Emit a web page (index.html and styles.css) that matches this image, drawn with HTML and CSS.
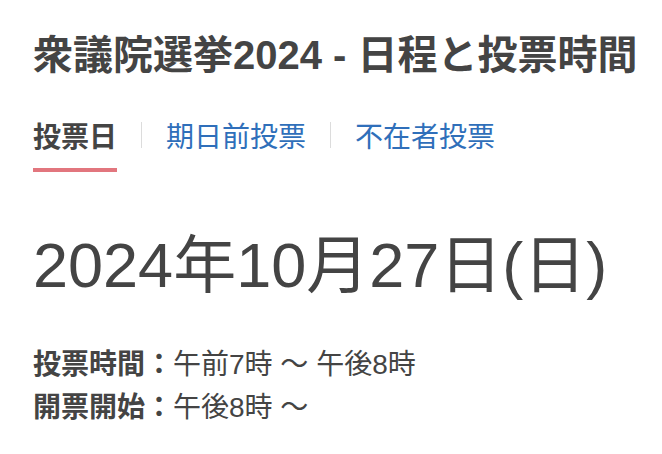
FILE: index.html
```html
<!DOCTYPE html>
<html lang="ja">
<head>
<meta charset="utf-8">
<title>衆議院選挙2024 - 日程と投票時間</title>
<link rel="stylesheet" href="styles.css">
</head>
<body>
<main class="page">
  <h1 class="title">衆議院選挙2024 - 日程と投票時間</h1>
  <nav class="tabs">
    <a class="tab tab-active">投票日</a>
    <span class="sep"></span>
    <a class="tab">期日前投票</a>
    <span class="sep"></span>
    <a class="tab">不在者投票</a>
  </nav>
  <p class="date">2024年10月27日(日)</p>
  <dl class="info">
    <div class="row"><dt class="label">投票時間：</dt><dd class="value">午前7時 〜 午後8時</dd></div>
    <div class="row"><dt class="label">開票開始：</dt><dd class="value">午後8時 〜</dd></div>
  </dl>
</main>
</body>
</html>
```
FILE: styles.css
```css
html, body {
  margin: 0;
  padding: 0;
  background: #ffffff;
}
body {
  font-family: "Liberation Sans", "Noto Sans CJK JP", sans-serif;
  color: #444444;
}
.page {
  padding: 31px 33px 0;
  display: flex;
  flex-direction: column;
  align-items: flex-start;
}
.title {
  margin: 0;
  font-size: 40px;
  line-height: 48px;
  font-weight: 700;
  color: #444444;
  white-space: nowrap;
}
.tabs {
  margin-top: 45px;
  display: flex;
  align-items: flex-start;
}
.tab {
  font-size: 28px;
  line-height: 28px;
  color: #2f6fba;
  padding-bottom: 20px;
  white-space: nowrap;
}
.tab-active {
  color: #444444;
  font-weight: 700;
  padding-bottom: 16px;
  border-bottom: 4px solid #e2767e;
}
.sep {
  width: 1px;
  height: 26px;
  margin: -2px 24px 0;
  background: #dcdcdc;
}
.date {
  margin: 61px 0 0;
  font-size: 63px;
  line-height: 64px;
  font-weight: 400;
  white-space: nowrap;
}
.info {
  margin: 46px 0 0;
}
.row {
  display: flex;
  font-size: 28px;
  line-height: 43px;
}
.label {
  font-weight: 700;
}
.value {
  margin: 0;
  white-space: pre;
}
```
